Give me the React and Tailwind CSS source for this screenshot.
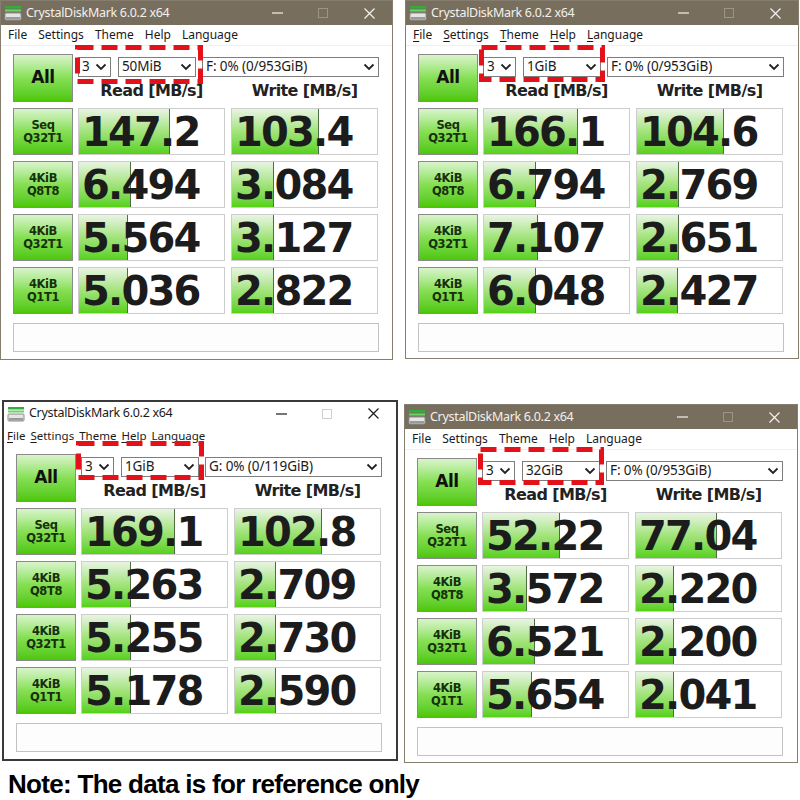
import React from "react";

const UI = { fontFamily: '"Noto Sans", "Open Sans", sans-serif' };
const BOLD = { fontFamily: '"DejaVu Sans", Verdana, sans-serif' };

const panels = [
  {
    key: "p1",
    frame: "w-[393px] h-[360px] border border-[#857d6e]",
    dark: true,
    ul: false,
    size: "50MiB",
    drive: "F: 0% (0/953GiB)",
    read: [["147.2", 0.63], ["6.494", 0.36], ["5.564", 0.34], ["5.036", 0.34]],
    write: [["103.4", 0.6], ["3.084", 0.29], ["3.127", 0.29], ["2.822", 0.29]],
    box: { left: 74, top: 44, w: 128, h: 39 },
  },
  {
    key: "p2",
    frame: "w-[394px] h-[359px] border border-[#857d6e] ml-[12px]",
    dark: true,
    ul: true,
    size: "1GiB",
    drive: "F: 0% (0/953GiB)",
    read: [["166.1", 0.65], ["6.794", 0.36], ["7.107", 0.37], ["6.048", 0.36]],
    write: [["104.6", 0.6], ["2.769", 0.29], ["2.651", 0.29], ["2.427", 0.28]],
    box: { left: 73, top: 44, w: 126, h: 37 },
  },
  {
    key: "p3",
    frame: "w-[396px] h-[361px] border-2 border-[#3a3a3a] ml-[2px]",
    dark: false,
    ul: true,
    compact: true,
    size: "1GiB",
    drive: "G: 0% (0/119GiB)",
    read: [["169.1", 0.64], ["5.263", 0.34], ["5.255", 0.34], ["5.178", 0.34]],
    write: [["102.8", 0.6], ["2.709", 0.28], ["2.730", 0.28], ["2.590", 0.28]],
    box: { left: 72, top: 39, w: 128, h: 39 },
  },
  {
    key: "p4",
    frame: "w-[394px] h-[359px] border border-[#857d6e] ml-[6px] mt-[4px]",
    dark: true,
    ul: false,
    size: "32GiB",
    drive: "F: 0% (0/953GiB)",
    read: [["52.22", 0.53], ["3.572", 0.3], ["6.521", 0.36], ["5.654", 0.34]],
    write: [["77.04", 0.56], ["2.220", 0.26], ["2.200", 0.26], ["2.041", 0.26]],
    box: { left: 73, top: 42, w: 126, h: 38 },
  },
];

const labels = [
  ["Seq", "Q32T1"],
  ["4KiB", "Q8T8"],
  ["4KiB", "Q32T1"],
  ["4KiB", "Q1T1"],
];

function AppIcon() {
  return (
    <svg width="18" height="16" viewBox="0 0 18 16">
      <rect x="1" y="1" width="16" height="2.5" fill="#2fae3a" />
      <rect x="1" y="4.5" width="16" height="2" fill="#6fd06a" />
      <rect x="1" y="8" width="16" height="7" rx="1" fill="#e4e4e4" stroke="#8c8c8c" strokeWidth="1" />
      <rect x="2" y="12" width="14" height="2.5" fill="#9a9a9a" />
    </svg>
  );
}

function Chevron() {
  return (
    <svg width="12" height="8" viewBox="0 0 12 8" className="shrink-0">
      <path d="M1.5 1.5 L6 6 L10.5 1.5" stroke="#222" strokeWidth="1.8" fill="none" />
    </svg>
  );
}

function TitleBar({ dark }) {
  const fg = dark ? "#f3f1ec" : "#1a1a1a";
  const dim = dark ? "#9c9484" : "#cfcfcf";
  return (
    <div
      className={
        dark
          ? "flex items-center h-[24px] bg-[#786e5e] text-[#f3f1ec]"
          : "flex items-center h-[23px] bg-white text-[#1a1a1a]"
      }
    >
      <div className="pl-[3px] pr-[4px] flex items-center">
        <AppIcon />
      </div>
      <span className="text-[12.5px] tracking-[-0.3px]" style={UI}>
        CrystalDiskMark 6.0.2 x64
      </span>
      <div className="flex-1" />
      <div className="w-[46px] flex justify-center">
        <svg width="11" height="10" viewBox="0 0 11 10">
          <line x1="0" y1="5" x2="11" y2="5" stroke={fg} strokeWidth="1.2" />
        </svg>
      </div>
      <div className="w-[46px] flex justify-center">
        <svg width="10" height="10" viewBox="0 0 10 10">
          <rect x="0.5" y="0.5" width="9" height="9" stroke={dim} fill="none" strokeWidth="1" />
        </svg>
      </div>
      <div className="w-[46px] flex justify-center">
        <svg width="11" height="11" viewBox="0 0 11 11">
          <path d="M0.5 0.5 L10.5 10.5 M10.5 0.5 L0.5 10.5" stroke={fg} strokeWidth="1.2" />
        </svg>
      </div>
    </div>
  );
}

function MenuItem({ text, ul }) {
  if (!ul) return <span>{text}</span>;
  return (
    <span>
      <span className="underline underline-offset-2">{text[0]}</span>
      {text.slice(1)}
    </span>
  );
}

function Menu({ ul, compact }) {
  const items = ["File", "Settings", "Theme", "Help", "Language"];
  return (
    <div
      className={
        compact
          ? "flex items-center h-[21px] pl-[3px] gap-[5px] text-[11.5px] text-[#1a1a1a] bg-white"
          : "flex items-center h-[21px] pl-[7px] gap-[11px] text-[12px] text-[#1a1a1a] bg-white border-b border-[#f0f0f0]"
      }
      style={UI}
    >
      {items.map((t) => (
        <MenuItem key={t} text={t} ul={ul} />
      ))}
    </div>
  );
}

function Select({ className, text }) {
  return (
    <div
      className={
        "flex items-center justify-between h-[20px] border border-[#7d7d7d] bg-white pl-[3px] pr-[3px] text-[13.5px] tracking-[-0.1px] text-[#1a1a1a] " +
        className
      }
      style={UI}
    >
      <span className="leading-none">{text}</span>
      <Chevron />
    </div>
  );
}

function Cell({ value, frac, extra }) {
  return (
    <div
      className={
        "relative h-[47px] w-[147px] border border-[#cdcdcd] bg-white overflow-hidden flex items-center " +
        (extra || "")
      }
    >
      <div
        className="absolute left-0 top-0 bottom-0 bg-linear-to-b from-[#e8f4e2] via-[#a2e37a] to-[#55d10c] border-r border-[#4f6e42]"
        style={{ width: `${frac * 100}%` }}
      />
      <span
        className="relative pl-[3px] text-[40px] leading-none font-bold tracking-[-1.8px] text-[#1c1c1c]"
        style={BOLD}
      >
        {value}
      </span>
    </div>
  );
}

function GreenButton({ className, children }) {
  return (
    <div
      className={
        "flex flex-col items-center justify-center border border-[#8a8a8a] bg-linear-to-b from-[#d9f4ca] via-[#86df52] to-[#4cc700] " +
        className
      }
    >
      {children}
    </div>
  );
}

function Window({ p }) {
  return (
    <div className={"relative flex flex-col bg-white shrink-0 " + p.frame}>
      <TitleBar dark={p.dark} />
      <Menu ul={p.ul} compact={p.compact} />
      <div className="flex flex-col pt-[8px] pl-[12px]">
        <div className="flex gap-[5px]">
          <GreenButton className="w-[60px] h-[48px]">
            <span className="text-[17px] font-bold tracking-[-0.5px] text-[#111]" style={BOLD}>
              All
            </span>
          </GreenButton>
          <div className="flex flex-col w-[301px]">
            <div className="flex mt-[3px]">
              <Select className="w-[33px]" text="3" />
              <Select className="w-[78px] ml-[7px]" text={p.size} />
              <Select className="w-[177px] ml-[6px]" text={p.drive} />
            </div>
            <div className="flex h-[25px] items-end pb-[2px]">
              <div
                className="w-[147px] text-center text-[16px] font-bold tracking-[-0.6px] leading-[18px] text-[#222]"
                style={BOLD}
              >
                Read [MB/s]
              </div>
              <div
                className="w-[147px] ml-[6px] text-center text-[16px] font-bold tracking-[-0.6px] leading-[18px] text-[#222]"
                style={BOLD}
              >
                Write [MB/s]
              </div>
            </div>
          </div>
        </div>
        <div className="flex flex-col gap-[6px] mt-[6px]">
          {labels.map((l, i) => (
            <div key={i} className="flex gap-[5px]">
              <GreenButton className="w-[60px] h-[47px]">
                <span
                  className="text-[11.5px] font-bold leading-[13px] tracking-[-0.4px] text-[#16300c] text-center"
                  style={BOLD}
                >
                  {l[0]}
                  <br />
                  {l[1]}
                </span>
              </GreenButton>
              <Cell value={p.read[i][0]} frac={p.read[i][1]} />
              <Cell value={p.write[i][0]} frac={p.write[i][1]} extra="ml-[1px]" />
            </div>
          ))}
        </div>
        <div className="mt-[9px] h-[29px] w-[366px] border border-[#c3c3c3] bg-[#fdfdfd]" />
      </div>
      <svg
        className="absolute pointer-events-none"
        style={{ left: p.box.left, top: p.box.top }}
        width={p.box.w}
        height={p.box.h}
      >
        <rect
          x="2.5"
          y="2.5"
          width={p.box.w - 5}
          height={p.box.h - 5}
          fill="none"
          stroke="#e3121a"
          strokeWidth="5"
          strokeDasharray="16 8"
        />
      </svg>
    </div>
  );
}

export default function App() {
  return (
    <div className="w-[800px] h-[800px] bg-white overflow-hidden">
      <div className="flex">
        <Window p={panels[0]} />
        <Window p={panels[1]} />
      </div>
      <div className="flex mt-[40px] items-start">
        <Window p={panels[2]} />
        <Window p={panels[3]} />
      </div>
      <div
        className="mt-[8px] pl-[8px] text-[26px] font-bold tracking-[-0.7px] leading-[26px] text-black"
        style={{ fontFamily: '"Liberation Sans", Arial, sans-serif' }}
      >
        Note: The data is for reference only
      </div>
    </div>
  );
}
